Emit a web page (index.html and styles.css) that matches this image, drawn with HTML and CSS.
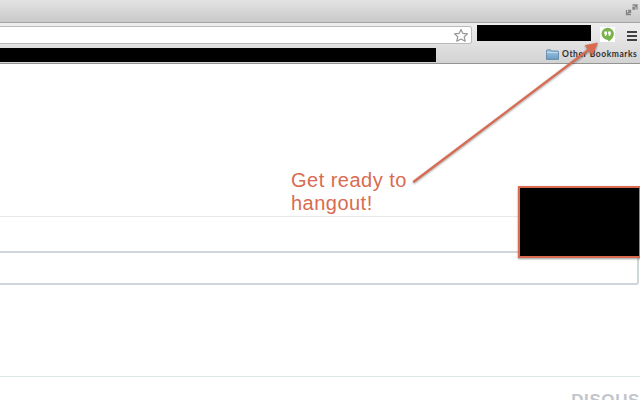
FILE: index.html
```html
<!DOCTYPE html>
<html lang="en">
<head>
<meta charset="utf-8">
<title>Get ready to hangout</title>
<link rel="stylesheet" href="styles.css">
</head>
<body>
<div class="window">
  <header class="titlebar">
    <svg class="expand" width="14" height="12" viewBox="0 0 14 12" fill="none" stroke="#858585" stroke-width="1.300"><path d="M7.500 1H12V5.500M12 1L8 5M8 2.500V5h2.500M1.500 6V10.500H6M1.500 10.500L5.500 6.500M3 6.500h2.500V9"/></svg>
  </header>
  <div class="toolbar">
    <div class="address">
      <svg width="16" height="15" viewBox="0 0 16 15"><path d="M8 1.400L9.900 5.400L14.500 5.900L11.200 8.800L12.200 13.200L8 11L3.800 13.200L4.800 8.800L1.500 5.900L6.100 5.400Z" fill="#fff" stroke="#959595" stroke-width="1.200" stroke-linejoin="round"/></svg>
    </div>
    <div class="extensions"></div>
    <div class="hangouts">
      <svg width="15" height="15" viewBox="0 0 15 15"><path d="M7.600 .7a6.200 6.200 0 0 1 6.200 6.200c0 3.300-2.500 6-5.600 7.500v-1.500h-.6A6 6 0 0 1 7.600.7Z" fill="#79b44b"/><path d="M4.300 4.500H7V7.200L5.800 9H4.700L5.300 7.200H4.300ZM8.100 4.500h2.700v2.700L9.600 9H8.500l.6-1.800h-1Z" fill="#fff"/></svg>
    </div>
    <div class="menu"><i></i><i></i><i></i></div>
  </div>
  <div class="bookmarks">
    <div class="bookmark-list"></div>
    <div class="folder">
      <svg width="13" height="11" viewBox="0 0 13 11"><defs><linearGradient id="f" x2="0" y2="1"><stop stop-color="#a3c7e2"/><stop offset="1" stop-color="#6b9dc5"/></linearGradient></defs><path d="M.5 2Q.5 .8 1.500 .8H4.500L5.500 2H11.500Q12.500 2 12.500 3V10.400H.5Z" fill="url(#f)" stroke="#5682a5" stroke-width=".8"/><path d="M1 3.500H12" stroke="#c3dced"/></svg>
      <span>Other Bookmarks</span>
    </div>
  </div>
  <main class="page">
    <section class="intro"></section>
    <section class="gap"></section>
    <section class="comment-box"></section>
    <section class="thread"></section>
    <footer class="footer"><span>DISQUS</span></footer>
  </main>
  <p class="note">Get ready to<br>hangout!</p>
  <div class="popup"></div>
  <svg class="arrow" width="640" height="400" viewBox="0 0 640 400"><path d="M414 181.500L589 49.500" stroke="#d96b51" stroke-width="2.200" stroke-linecap="round"/><path d="M598 42.500L592.700 55.500L584.700 45.300Z" fill="#d96b51"/></svg>
</div>
</body>
</html>
```
FILE: styles.css
```css
* { box-sizing: border-box; }
body { margin: 0; background: #fff; }
.window { position: relative; width: 640px; height: 400px; overflow: hidden; display: flex; flex-direction: column; }
.titlebar { height: 23px; flex: none; display: flex; justify-content: flex-end; padding: 4px 1px 0 0; background: linear-gradient(#e3e3e3, #c9c9c9); border-bottom: 1px solid #a5a5a5; }
.toolbar { height: 22px; flex: none; display: flex; background: linear-gradient(#eeeeee, #e0e0e0); }
.address { width: 472px; height: 18px; margin-top: 3px; display: flex; justify-content: flex-end; padding: 1px 2px 0 0; background: #fff; border: 1px solid #bababa; border-left: 0; border-radius: 0 3px 3px 0; }
.extensions { width: 114px; height: 16px; margin: 2px 0 0 5px; background: #000; }
.hangouts { width: 15px; height: 15px; margin: 4px 0 0 9px; background: #fff; }
.hangouts svg, .folder svg { display: block; }
.menu { width: 10px; margin: 8px 0 0 12px; display: flex; flex-direction: column; gap: 2px; }
.menu i { height: 2px; background: #404040; }
.bookmarks { height: 19px; flex: none; display: flex; justify-content: space-between; background: linear-gradient(#e0e0e0, #d3d3d3); border-bottom: 1px solid #949494; }
.bookmark-list { width: 436px; height: 14px; margin-top: 3px; background: #000; }
.folder { width: 94px; display: flex; gap: 3px; padding-top: 4px; }
.folder span { margin-top: -1px; font: bold 8.500px/13px Lato, sans-serif; letter-spacing: .55px; color: #303030; white-space: nowrap; }
.page { flex: 1; display: flex; flex-direction: column; }
.intro { height: 153px; border-bottom: 1px solid #e7e8e8; }
.gap { height: 34px; }
.comment-box { width: 639px; height: 34px; border: solid #d0d7db; border-width: 2px 2px 2px 0; border-radius: 0 0 3px 0; }
.thread { height: 92px; border-bottom: 1px solid #dfe6e7; }
.footer { height: 23px; overflow: hidden; display: flex; justify-content: flex-end; padding-top: 15px; }
.footer span { font: bold 17px/18px "Liberation Sans", sans-serif; letter-spacing: .6px; color: #c2c6cc; }
.note { position: absolute; left: 291px; top: 169px; margin: 0; font: 20px/23px "Liberation Sans", sans-serif; letter-spacing: .48px; color: #d96b51; }
.popup { position: absolute; left: 518px; top: 186px; width: 123px; height: 72px; background: #000; border: 2px solid #d96b51; box-shadow: 0 1px 2px rgba(0, 0, 0, .4); }
.arrow { position: absolute; left: 0; top: 0; filter: drop-shadow(0 1px 1px rgba(0, 0, 0, .4)); }
```
